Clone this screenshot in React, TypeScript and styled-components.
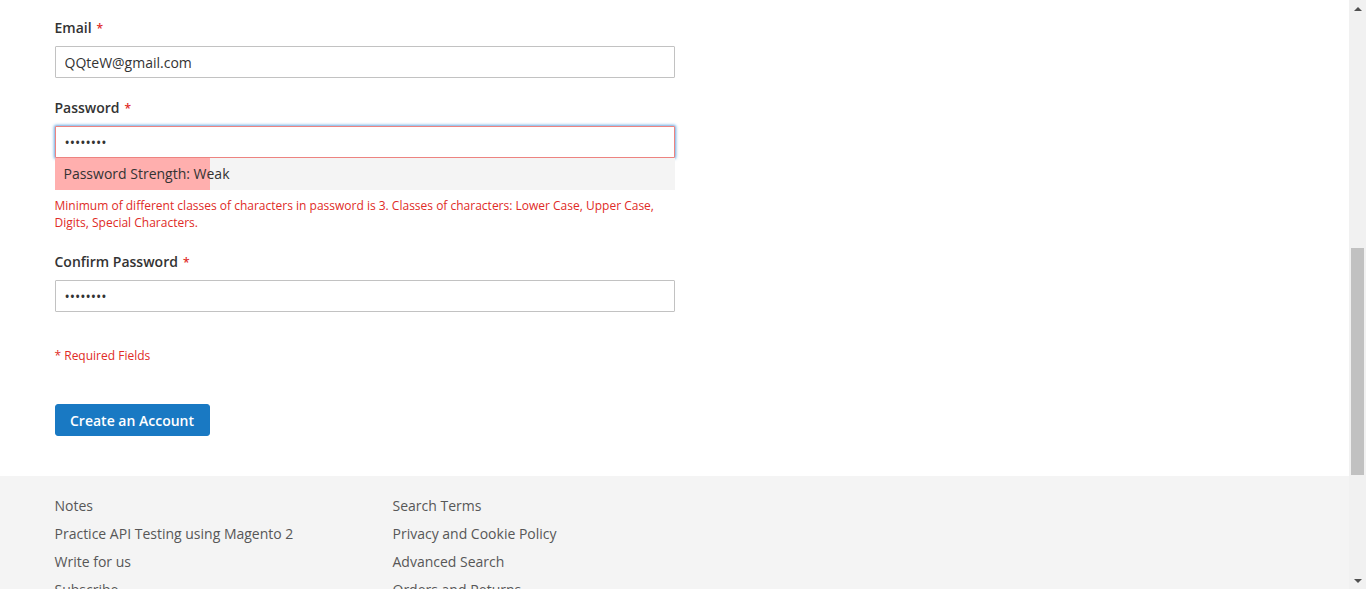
import React from 'react';
import styled, { createGlobalStyle } from 'styled-components';

const GlobalStyle = createGlobalStyle`
  html, body {
    margin: 0;
    padding: 0;
    height: 100%;
    overflow: hidden;
  }
  body {
    font-family: 'Open Sans', 'Liberation Sans', sans-serif;
    color: #333;
    background: #fff;
  }
  * {
    box-sizing: border-box;
  }
`;

const Viewport = styled.div`
  display: flex;
  width: 100vw;
  height: 100vh;
  overflow: hidden;
`;

const PageColumn = styled.div`
  flex: 1;
  display: flex;
  flex-direction: column;
  min-width: 0;
`;

const Container = styled.div`
  width: 100%;
  max-width: 1280px;
  margin: 0 auto;
  padding: 0 20px;
`;

const FormArea = styled(Container)`
  padding-top: 18px;
  padding-bottom: 40px;
`;

const Fieldset = styled.div`
  width: 620px;
  display: flex;
  flex-direction: column;
`;

const Field = styled.div<{ $gap?: number }>`
  display: flex;
  flex-direction: column;
  margin-bottom: ${({ $gap }) => ($gap ?? 20)}px;
`;

const Label = styled.label`
  display: block;
  height: 20px;
  font-size: 14px;
  line-height: 20px;
  font-weight: 600;
  color: #333;
  margin-bottom: 8px;

  &::after {
    content: '*';
    color: #e02b27;
    font-size: 12px;
    margin-left: 5px;
  }
`;

const Input = styled.input<{ $focused?: boolean }>`
  width: 100%;
  height: 32px;
  padding: 0 9px;
  font-family: 'Open Sans', 'Liberation Sans', sans-serif;
  font-size: 14px;
  color: #333;
  background: #fff;
  border: 1px solid ${({ $focused }) => ($focused ? '#ed8380' : '#c2c2c2')};
  border-radius: 1px;
  outline: none;
  box-shadow: ${({ $focused }) => ($focused ? '0 0 3px 1px #68a8e0' : 'none')};
`;

const Meter = styled.div<{ $pct: number }>`
  height: 32px;
  line-height: 32px;
  padding-left: 9px;
  font-size: 14px;
  color: #333;
  background: linear-gradient(
    to right,
    #ffafae ${({ $pct }) => $pct}%,
    #f4f4f4 ${({ $pct }) => $pct}%
  );
`;

const ErrorText = styled.div`
  margin-top: 7px;
  font-size: 12px;
  line-height: 17px;
  color: #e02b27;
`;

const RequiredNote = styled.div`
  margin-top: 35px;
  font-size: 12px;
  line-height: 17px;
  color: #e02b27;
`;

const PrimaryButton = styled.button`
  align-self: flex-start;
  margin-top: 40px;
  height: 32px;
  padding: 0 14.5px;
  font-family: 'Open Sans', 'Liberation Sans', sans-serif;
  font-size: 14px;
  font-weight: 600;
  color: #fff;
  background: #1979c3;
  border: 1px solid #1979c3;
  border-radius: 3px;
  cursor: pointer;
`;

const Footer = styled.footer`
  flex: 1;
  background: #f4f4f4;
`;

const FooterInner = styled(Container)`
  padding-top: 20px;
  display: grid;
  grid-template-columns: 338px 338px;
`;

const LinkList = styled.ul`
  list-style: none;
  margin: 0;
  padding: 0;
  display: flex;
  flex-direction: column;
  gap: 8px;
`;

const FooterLink = styled.a`
  display: block;
  font-size: 14px;
  line-height: 20px;
  color: #575757;
  text-decoration: none;
`;

const ScrollTrack = styled.div`
  width: 17px;
  flex: none;
  background: #f1f1f1;
  display: flex;
  flex-direction: column;
  align-items: center;
`;

const ScrollArrow = styled.div<{ $down?: boolean }>`
  height: 17px;
  width: 100%;
  display: flex;
  align-items: center;
  justify-content: center;

  &::before {
    content: '';
    width: 0;
    height: 0;
    border-left: 4px solid transparent;
    border-right: 4px solid transparent;
    ${({ $down }) =>
      $down ? 'border-top: 4px solid #505050;' : 'border-bottom: 4px solid #505050;'}
  }
`;

const ScrollSpace = styled.div<{ $size: number }>`
  height: ${({ $size }) => $size}px;
  flex: none;
`;

const ScrollThumb = styled.div`
  width: 13px;
  height: 227px;
  flex: none;
  background: #c1c1c1;
`;

const leftLinks = ['Notes', 'Practice API Testing using Magento 2', 'Write for us', 'Subscribe'];
const rightLinks = ['Search Terms', 'Privacy and Cookie Policy', 'Advanced Search', 'Orders and Returns'];

export default function App() {
  return (
    <>
      <GlobalStyle />
      <Viewport>
        <PageColumn>
          <FormArea>
            <Fieldset>
              <Field>
                <Label>Email</Label>
                <Input type="email" defaultValue="QQteW@gmail.com" readOnly />
              </Field>
              <Field $gap={21}>
                <Label>Password</Label>
                <Input type="password" defaultValue="Qwerty12" readOnly $focused />
                <Meter $pct={25}>Password Strength: Weak</Meter>
                <ErrorText>
                  Minimum of different classes of characters in password is 3. Classes of characters: Lower Case,
                  Upper Case, Digits, Special Characters.
                </ErrorText>
              </Field>
              <Field $gap={0}>
                <Label>Confirm Password</Label>
                <Input type="password" defaultValue="Qwerty12" readOnly />
              </Field>
              <RequiredNote>* Required Fields</RequiredNote>
              <PrimaryButton type="button">Create an Account</PrimaryButton>
            </Fieldset>
          </FormArea>
          <Footer>
            <FooterInner>
              <LinkList>
                {leftLinks.map((l) => (
                  <li key={l}>
                    <FooterLink href="#">{l}</FooterLink>
                  </li>
                ))}
              </LinkList>
              <LinkList>
                {rightLinks.map((l) => (
                  <li key={l}>
                    <FooterLink href="#">{l}</FooterLink>
                  </li>
                ))}
              </LinkList>
            </FooterInner>
          </Footer>
        </PageColumn>
        <ScrollTrack>
          <ScrollArrow />
          <ScrollSpace $size={231} />
          <ScrollThumb />
          <ScrollSpace $size={97} />
          <ScrollArrow $down />
        </ScrollTrack>
      </Viewport>
    </>
  );
}
